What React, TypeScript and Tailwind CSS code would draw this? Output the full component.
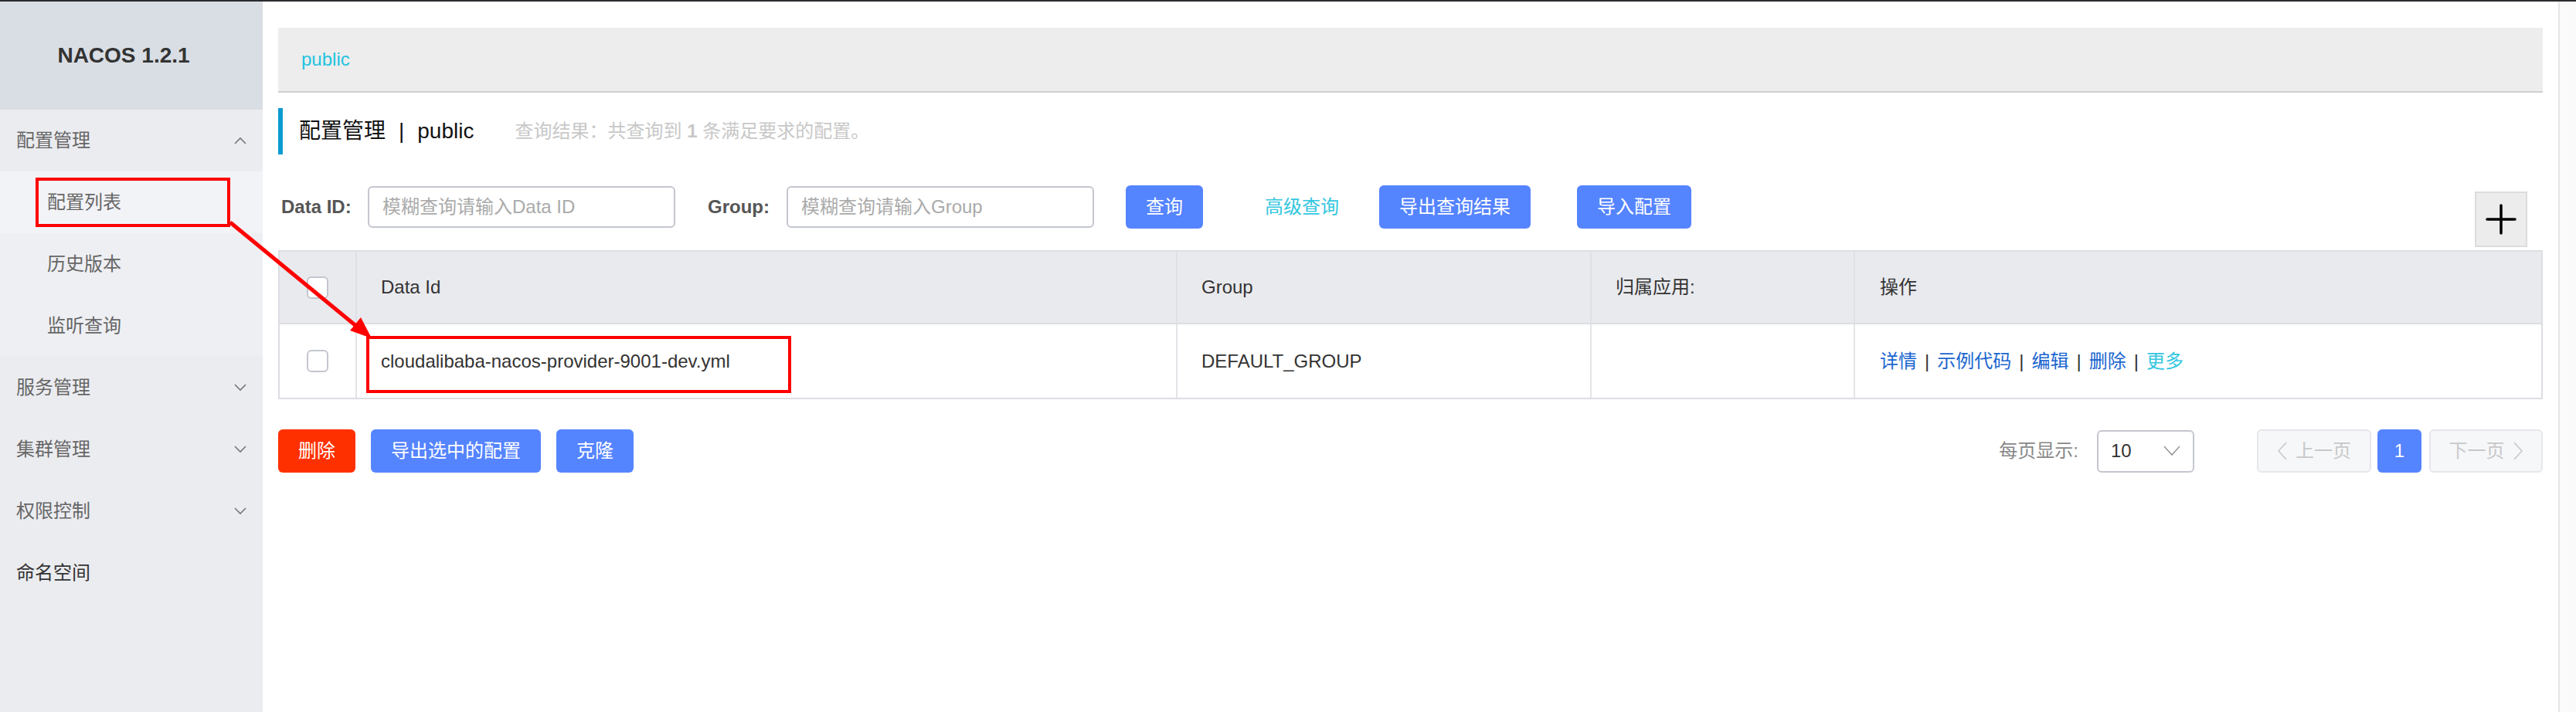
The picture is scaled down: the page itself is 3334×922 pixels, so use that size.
import React from "react"

const font = "font-['Liberation_Sans','Noto_Sans_CJK_SC',sans-serif]"

function Chevron({ up = false }: { up?: boolean }) {
  return (
    <svg width="16" height="10" viewBox="0 0 16 10" fill="none" stroke="#777" strokeWidth="1.6">
      {up ? <path d="M1 9 L8 2 L15 9" /> : <path d="M1 1 L8 8 L15 1" />}
    </svg>
  )
}

const subItems = ["配置列表", "历史版本", "监听查询"]
const groups = ["服务管理", "集群管理", "权限控制"]

function Sidebar() {
  return (
    <aside className="w-[340px] shrink-0 bg-[#ebecf0] flex flex-col">
      <div className="h-[140px] bg-[#d9dee4] flex items-center justify-center pr-[20px]">
        <span className="text-[28px] font-bold text-[#333] font-['Liberation_Sans',sans-serif]">NACOS 1.2.1</span>
      </div>
      <div className="h-[80px] flex items-center justify-between pl-[21px] pr-[21px] text-[24px] text-[#666]">
        <span>配置管理</span>
        <Chevron up />
      </div>
      <div className="bg-[#eeeff3]">
        {subItems.map((s, i) => (
          <div
            key={s}
            className={
              i === 0
                ? "relative h-[80px] flex items-center pl-[61px] text-[24px] text-[#666] bg-[#f2f3f7]"
                : "relative h-[80px] flex items-center pl-[61px] text-[24px] text-[#666]"
            }
          >
            {s}
            {i === 0 && (
              <div className="absolute left-[46px] top-[8px] w-[252px] h-[64px] border-[4px] border-[#ff0000]" />
            )}
          </div>
        ))}
      </div>
      {groups.map((g) => (
        <div key={g} className="h-[80px] flex items-center justify-between pl-[21px] pr-[21px] text-[24px] text-[#666]">
          <span>{g}</span>
          <Chevron />
        </div>
      ))}
      <div className="h-[80px] flex items-center pl-[21px] text-[24px] text-[#333]">命名空间</div>
    </aside>
  )
}

function Btn({ children, className = "" }: { children: React.ReactNode; className?: string }) {
  return (
    <button className={"h-[56px] px-[26px] rounded-[6px] bg-[#5584ff] text-white text-[24px] leading-none " + className}>
      {children}
    </button>
  )
}

function FilterRow() {
  return (
    <div className="mt-[40px] h-[80px] flex items-start">
      <div className="h-[56px] flex items-center">
        <span className="w-[116px] pl-[4px] text-[24px] font-bold text-[#555]">Data ID:</span>
        <div className="w-[398px] h-[54px] border-2 border-[#c4c6cf] rounded-[6px] flex items-center pl-[17px] text-[24px] text-[#aaa]">
          模糊查询请输入Data ID
        </div>
        <span className="ml-[42px] w-[102px] text-[24px] font-bold text-[#555]">Group:</span>
        <div className="w-[398px] h-[54px] border-2 border-[#c4c6cf] rounded-[6px] flex items-center pl-[17px] text-[24px] text-[#aaa]">
          模糊查询请输入Group
        </div>
        <Btn className="ml-[41px]">查询</Btn>
        <span className="ml-[80px] text-[24px] text-[#33c6e0]">高级查询</span>
        <Btn className="ml-[52px]">导出查询结果</Btn>
        <Btn className="ml-[60px]">导入配置</Btn>
      </div>
      <div className="ml-auto mr-[20px] mt-[8px] w-[68px] h-[72px] bg-[#ececec] border-2 border-[#dcdcdc] flex items-center justify-center">
        <svg width="40" height="40" viewBox="0 0 40 40" stroke="#000" strokeWidth="3.5" strokeLinecap="round">
          <path d="M20 2 V38 M2 20 H38" />
        </svg>
      </div>
    </div>
  )
}

function Checkbox() {
  return <div className="w-[28px] h-[29px] border-2 border-[#c4c6cf] rounded-[6px] bg-white" />
}

const cols = "grid grid-cols-[98px_1062px_536px_341px_1fr]"

function Table() {
  return (
    <div className="mt-[4px] border-2 border-[#dcdee3] text-[24px] text-[#333]">
      <div className={cols + " h-[94px] bg-[#e9eaee] border-b-2 border-[#dcdee3]"}>
        <div className="flex items-center justify-center">
          <Checkbox />
        </div>
        <div className="border-l-2 border-[#dfe0e5] flex items-center pl-[31px]">Data Id</div>
        <div className="border-l-2 border-[#dfe0e5] flex items-center pl-[31px]">Group</div>
        <div className="border-l-2 border-[#dfe0e5] flex items-center pl-[31px]">归属应用:</div>
        <div className="border-l-2 border-[#dfe0e5] flex items-center pl-[32px]">操作</div>
      </div>
      <div className={cols + " h-[95px] bg-white"}>
        <div className="flex items-center justify-center">
          <Checkbox />
        </div>
        <div className="relative border-l-2 border-[#e3e4e8] flex items-center pl-[31px]">
          cloudalibaba-nacos-provider-9001-dev.yml
          <div className="absolute left-[12px] top-[15px] w-[550px] h-[74px] border-[4px] border-[#ff0000]" />
        </div>
        <div className="border-l-2 border-[#e3e4e8] flex items-center pl-[31px]">DEFAULT_GROUP</div>
        <div className="border-l-2 border-[#e3e4e8]" />
        <div className="border-l-2 border-[#e3e4e8] flex items-center pl-[32px]">
          <span className="text-[#1a66cf]">详情</span>
          <span className="mx-[10px]">|</span>
          <span className="text-[#1a66cf]">示例代码</span>
          <span className="mx-[10px]">|</span>
          <span className="text-[#1a66cf]">编辑</span>
          <span className="mx-[10px]">|</span>
          <span className="text-[#1a66cf]">删除</span>
          <span className="mx-[10px]">|</span>
          <span className="text-[#33c6e0]">更多</span>
        </div>
      </div>
    </div>
  )
}

function BottomRow() {
  return (
    <div className="mt-[39px] h-[56px] flex items-center">
      <button className="h-[56px] px-[26px] rounded-[6px] bg-[#ff3000] text-white text-[24px]">删除</button>
      <Btn className="ml-[20px]">导出选中的配置</Btn>
      <Btn className="ml-[20px]">克隆</Btn>
      <div className="ml-auto flex items-center">
        <span className="text-[24px] text-[#888]">每页显示:</span>
        <div className="ml-[24px] w-[126px] h-[55px] border-2 border-[#c4c6cf] rounded-[6px] flex items-center justify-between pl-[16px] pr-[16px]">
          <span className="text-[24px] text-[#333]">10</span>
          <svg width="22" height="14" viewBox="0 0 22 14" fill="none" stroke="#999" strokeWidth="1.6">
            <path d="M1 1 L11 12 L21 1" />
          </svg>
        </div>
        <div className="ml-[81px] w-[148px] h-[56px] border-2 border-[#e6e7eb] bg-[#f6f7f9] rounded-[6px] flex items-center justify-center gap-[10px] text-[24px] text-[#c8c8c8]">
          <svg width="14" height="24" viewBox="0 0 14 24" fill="none" stroke="#c8c8c8" strokeWidth="1.6">
            <path d="M12 1 L2 12 L12 23" />
          </svg>
          <span>上一页</span>
        </div>
        <div className="ml-[8px] w-[57px] h-[56px] rounded-[6px] bg-[#5584ff] flex items-center justify-center text-[24px] text-white">1</div>
        <div className="ml-[10px] w-[147px] h-[56px] border-2 border-[#e6e7eb] bg-[#f6f7f9] rounded-[6px] flex items-center justify-center gap-[10px] text-[24px] text-[#c8c8c8]">
          <span>下一页</span>
          <svg width="14" height="24" viewBox="0 0 14 24" fill="none" stroke="#c8c8c8" strokeWidth="1.6">
            <path d="M2 1 L12 12 L2 23" />
          </svg>
        </div>
      </div>
    </div>
  )
}

export default function App() {
  return (
    <div className={"relative w-[3334px] h-[922px] overflow-hidden bg-white " + font}>
      <div className="h-[2px] bg-[#2a2c2f]" />
      <div className="flex h-[920px]">
        <Sidebar />
        <main className="flex-1 px-[20px] pt-[34px]">
          <div className="h-[84px] bg-[#ededed] border-b-2 border-[#cfcfcf] flex items-center pl-[30px] text-[24px] text-[#1fc3e0]">
            public
          </div>
          <div className="mt-[20px] h-[60px] border-l-[6px] border-[#0b9bd1] flex items-center pl-[21px]">
            <span className="text-[28px] text-[#111]">配置管理</span>
            <span className="text-[28px] text-[#111] mx-[17px]">|</span>
            <span className="text-[28px] text-[#111]">public</span>
            <span className="ml-[53px] text-[24px] text-[#c8c8c8]">
              查询结果：共查询到 <b>1</b> 条满足要求的配置。
            </span>
          </div>
          <FilterRow />
          <Table />
          <BottomRow />
        </main>
        <div className="w-[23px] shrink-0 border-l-2 border-[#e6e6e6] bg-[#fafafa]" />
      </div>
      <svg className="absolute inset-0 pointer-events-none" width="3334" height="922">
        <line x1="298" y1="288" x2="462" y2="423" stroke="#ff0000" strokeWidth="5" />
        <polygon points="481,438 453,428 467,411" fill="#ff0000" />
      </svg>
    </div>
  )
}
